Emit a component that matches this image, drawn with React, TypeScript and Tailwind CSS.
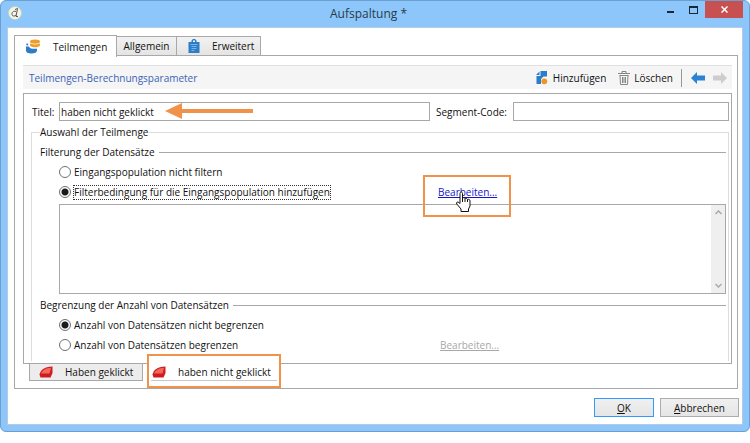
import React from 'react';

interface RadioRowProps {
  id: string;
  name: string;
  label: string;
  checked?: boolean;
  focused?: boolean;
  children?: React.ReactNode;
}

const RadioRow: React.FC<RadioRowProps> = ({ id, name, label, checked, focused, children }) => (
  <div className="flex items-center h-5">
    <div className="flex items-center w-[382px]">
      <input
        id={id}
        type="radio"
        name={name}
        defaultChecked={checked}
        className="appearance-none shrink-0 w-3 h-3 rounded-full border border-[#707070] bg-white checked:bg-[radial-gradient(circle,#1c1c1c_3px,#ffffff_4px)]"
      />
      <label
        htmlFor={id}
        className={`ml-[2px] h-[15px] leading-[13px] border border-dotted whitespace-nowrap ${
          focused ? 'border-[#333]' : 'border-transparent'
        }`}
      >
        {label}
      </label>
    </div>
    {children}
  </div>
);

const SectionHeading: React.FC<{ title: string }> = ({ title }) => (
  <div className="flex items-center gap-1 h-5">
    <h3 className="whitespace-nowrap">{title}</h3>
    <div className="grow h-px bg-[#a8a8a8]" />
  </div>
);

const DatabaseIcon = () => (
  <svg width="15" height="15" viewBox="0 0 15 15" className="shrink-0" aria-hidden="true">
    <path d="M0 7.500h3c.5 1.500 2 2.300 4.500 2.300H11V11.500c0 2-2.200 3-5.700 3S0 13.500 0 11.500z" fill="#2b7cc9" />
    <ellipse cx="9" cy="2.600" rx="5" ry="2.200" fill="#ee9d2b" />
    <path d="M4 4.300c1 1.500 9 1.500 10 0v2C13 9 5 9 4 6.300z" fill="#ee9d2b" />
    <circle cx="1.200" cy="5.500" r="1" fill="#2b7cc9" />
  </svg>
);

const ClipboardIcon = () => (
  <svg width="12" height="14" viewBox="0 0 12 14" className="shrink-0" aria-hidden="true">
    <path d="M.5 3h3V1.500L5 0h2l1.500 1.500V3h3v11H.5z" fill="#2b7cc9" />
    <path d="M5 1.500h2V3H5z" fill="#fff" />
    <path d="M2.500 5.500h7M3.500 7.500h5M3.500 9.500h5M3.500 11.500h3" stroke="#8fc3ee" strokeWidth=".8" />
  </svg>
);

const AddIcon = () => (
  <svg width="12" height="14" viewBox="0 0 12 14" aria-hidden="true">
    <path d="M4.500 0H11v5.500H7.500L5 8v5H.5V5h4z" fill="#2b7cc9" />
    <path d="M0 4l3.500-3.500V4z" fill="#2b7cc9" />
    <circle cx="8.300" cy="10.300" r="2.900" fill="#ee9420" />
  </svg>
);

const TrashIcon = () => (
  <svg width="12" height="14" viewBox="0 0 12 14" fill="none" stroke="#858585" aria-hidden="true">
    <path d="M0 2.500h12M4 2V.5h4V2" />
    <path d="M1.500 4.500h9M2 4.500l.5 9h7l.5-9M4.500 6v6M6 6v6M7.500 6v6" />
  </svg>
);

const ArrowIcon: React.FC<{ color: string; flip?: boolean }> = ({ color, flip }) => (
  <svg width="14" height="12" viewBox="0 0 14 12" aria-hidden="true">
    <path
      d={flip ? 'M14 6L8 0v3.500H0v5h8V12z' : 'M0 6l6-6v3.500h8v5H6V12z'}
      fill={color}
    />
  </svg>
);

const SegmentIcon = () => (
  <svg width="14" height="12" viewBox="0 0 14 12" className="shrink-0" aria-hidden="true">
    <path d="M.5 8.500C1.500 4 5 1 13.500.5v6.500L11.500 11.500h-10z" fill="#cf1c1c" />
    <path d="M2 7.500C3.500 4 6.500 2 12 1.700L10.500 7.500z" fill="#f4675f" />
  </svg>
);

const CursorIcon = () => (
  <svg width="17" height="22" viewBox="0 0 17 22" className="absolute left-[17px] top-[6px] z-10" aria-hidden="true">
    <path
      d="M5 10V2.500c0-2 2.500-2 2.500 0V7c1-.7 2-.3 2.500.6 1-.5 2-.1 2.500.8 1.200-.4 2.500.1 2.500 1.400V15l-1.500 3v2.500H6V18L1.800 13c-1-1.400.7-2.800 2-1.500L5 12.500z"
      fill="#fff"
      stroke="#111"
    />
    <path d="M7.500 7v4M10 8v3M12.500 8.500V11" stroke="#111" fill="none" />
  </svg>
);

const App: React.FC = () => {
  return (
    <div className="bg-white text-[10px] leading-[14px] text-[#111] font-['Open_Sans','Noto_Sans',sans-serif]">
      <div className="bg-[#8cc6fb] rounded-md border border-[#6a9fd0] px-[6px] pb-[6px]">
        <header className="flex items-start justify-between h-[26px] text-[#2b3a4a]">
          <div className="flex-1 pt-[5px] pl-px">
            <svg width="14" height="14" viewBox="0 0 14 14" aria-hidden="true">
              <circle cx="7" cy="7" r="6.500" fill="#f4f5e9" stroke="#c9d3b8" />
              <path d="M9.500 2.500L8 10.500h2M8 5.500C5.500 4.500 3.500 6.500 4 8.500s2.500 2 4 .5M7 3.500l2.500-1" fill="none" stroke="#555" />
            </svg>
          </div>
          <h1 className="text-xs leading-[26px] pr-[14px]">Aufspaltung *</h1>
          <div className="flex flex-1 justify-end">
            <button type="button" aria-label="Minimieren" className="flex justify-center w-[22px] pt-[10px]">
              <span className="w-[7px] h-[2px] bg-[#1b2733]" />
            </button>
            <button type="button" aria-label="Maximieren" className="flex justify-center w-6 pt-[5px]">
              <span className="w-[9px] h-2 border border-t-2 border-[#1b2733]" />
            </button>
            <button type="button" aria-label="Schließen" className="flex items-center justify-center w-[38px] h-[17px] bg-[#c75050]">
              <svg width="7" height="7" viewBox="0 0 7 7" stroke="#fff" strokeWidth="1.500" aria-hidden="true">
                <path d="M.5.5l6 6M6.500.5l-6 6" />
              </svg>
            </button>
          </div>
        </header>

        <main className="bg-white border border-[#b5cbe0] pt-[6px] pl-[6px] pr-1 pb-[7px]">
          <nav className="flex items-end h-[22px]">
            <button type="button" className="relative z-10 flex items-center w-[103px] h-[22px] pl-[11px] gap-3 -mb-px bg-white border border-b-0 border-[#a8a8a8]">
              <DatabaseIcon />
              Teilmengen
            </button>
            <button type="button" className="w-[60px] h-5 bg-linear-to-b from-[#f2f2f2] to-[#e4e4e4] border border-l-0 border-[#a8a8a8]">
              Allgemein
            </button>
            <button type="button" className="flex items-center w-[84px] h-5 pl-[11px] gap-3 bg-linear-to-b from-[#f2f2f2] to-[#e4e4e4] border border-l-0 border-[#a8a8a8]">
              <ClipboardIcon />
              Erweitert
            </button>
          </nav>

          <div className="border border-[#a8a8a8] -mt-px pt-[9px] pl-2 pr-[5px] pb-2">
            <div className="flex items-center h-6 pl-[6px] pr-[5px] bg-[#f5f5f5] border-t border-[#e0e0e0]">
              <h2 className="grow text-[#3b62b5]">Teilmengen-Berechnungsparameter</h2>
              <button type="button" className="flex items-center gap-[5px]">
                <AddIcon />
                Hinzufügen
              </button>
              <button type="button" className="flex items-center gap-1 ml-3">
                <TrashIcon />
                Löschen
              </button>
              <div className="w-px h-[18px] ml-2 mr-[9px] bg-[#999]" />
              <button type="button" aria-label="Zurück">
                <ArrowIcon color="#2b83d2" />
              </button>
              <button type="button" aria-label="Weiter" className="ml-2">
                <ArrowIcon color="#cdcdcd" flip />
              </button>
            </div>

            <section className="mt-1 border border-[#a8a8a8] pt-2 pl-[7px] pr-[2px] pb-[2px]">
              <div className="flex items-center">
                <label htmlFor="titel" className="w-7 shrink-0 pl-px">Titel:</label>
                <div className="relative grow-[371] basis-0">
                  <input
                    id="titel"
                    defaultValue="haben nicht geklickt"
                    className="block w-full h-[19px] px-px border border-[#a8a8a8] bg-white"
                  />
                  <svg width="89" height="18" viewBox="0 0 89 18" className="absolute left-[106px] top-0" aria-hidden="true">
                    <path d="M0 9L17 1v6h71v4H17v6z" fill="#f0924a" />
                  </svg>
                </div>
                <label htmlFor="segment" className="w-[83px] shrink-0 pl-[6px] whitespace-nowrap">Segment-Code:</label>
                <div className="grow-[216] basis-0">
                  <input id="segment" className="block w-full h-[19px] px-px border border-[#a8a8a8] bg-white" />
                </div>
              </div>

              <fieldset className="mt-[5px] border border-b-0 border-[#dcdcdc] pl-2 pr-[2px]">
                <legend className="h-3 leading-3 pr-px">Auswahl der Teilmenge</legend>
                <div className="-mt-px pt-[5px]">
                  <SectionHeading title="Filterung der Datensätze" />
                  <div className="pl-[19px]">
                    <RadioRow id="filter-off" name="filter" label="Eingangspopulation nicht filtern" />
                    <RadioRow
                      id="filter-on"
                      name="filter"
                      label="Filterbedingung für die Eingangspopulation hinzufügen"
                      checked
                      focused
                    >
                      <div className="relative -ml-[3px]">
                        <a href="#bearbeiten" className="text-[#1515cc] underline">Bearbeiten...</a>
                        <CursorIcon />
                        <div className="absolute -left-[15px] -top-[10px] w-[88px] h-[42px] border-2 border-[#f0924a] pointer-events-none" />
                      </div>
                    </RadioRow>
                  </div>

                  <div className="flex mt-[2px] ml-[19px] h-[90px] border border-[#a8a8a8]">
                    <textarea aria-label="Filterbedingung" readOnly className="grow resize-none outline-none" />
                    <div className="flex flex-col items-center justify-between w-[14px] py-[5px] bg-[#efefef]">
                      <svg width="7" height="5" viewBox="0 0 7 5" fill="none" stroke="#aaa" strokeWidth="1.500" aria-hidden="true">
                        <path d="M.5 4L3.500 1l3 3" />
                      </svg>
                      <svg width="7" height="5" viewBox="0 0 7 5" fill="none" stroke="#aaa" strokeWidth="1.500" aria-hidden="true">
                        <path d="M.5 1l3 3 3-3" />
                      </svg>
                    </div>
                  </div>

                  <div className="mt-px">
                    <SectionHeading title="Begrenzung der Anzahl von Datensätzen" />
                  </div>
                  <div className="pl-[19px] pb-[6px]">
                    <RadioRow id="limit-off" name="limit" label="Anzahl von Datensätzen nicht begrenzen" checked />
                    <RadioRow id="limit-on" name="limit" label="Anzahl von Datensätzen begrenzen">
                      <a href="#bearbeiten" aria-disabled="true" className="-ml-px text-[#a8a8a8] underline">Bearbeiten...</a>
                    </RadioRow>
                  </div>
                </div>
              </fieldset>
            </section>

            <div className="flex h-4 pl-[6px]">
              <button type="button" className="flex items-center w-[114px] h-[17px] pl-[9px] gap-3 bg-[#ececec] border border-t-0 border-[#a8a8a8] whitespace-nowrap">
                <SegmentIcon />
                Haben geklickt
              </button>
              <div className="relative ml-1">
                <div className="absolute left-0 -top-[10px] w-[134px] h-[34px] border-2 border-[#f0924a] bg-white px-[2px] pt-[7px]">
                  <button type="button" className="flex items-center w-full h-[18px] pl-px gap-3 border-b border-[#c8c8c8] whitespace-nowrap">
                    <SegmentIcon />
                    haben nicht geklickt
                  </button>
                </div>
              </div>
            </div>
          </div>

          <footer className="flex justify-end gap-[6px] mt-[9px] -mr-px">
            <button type="button" className="w-[60px] h-[19px] border border-[#3399ff] bg-linear-to-b from-[#f0f0f0] to-[#e5e5e5]">
              <u>O</u>K
            </button>
            <button type="button" className="w-[79px] h-[19px] border border-[#acacac] bg-linear-to-b from-[#f0f0f0] to-[#e5e5e5]">
              <u>A</u>bbrechen
            </button>
          </footer>
        </main>
      </div>
    </div>
  );
};

export default App;
